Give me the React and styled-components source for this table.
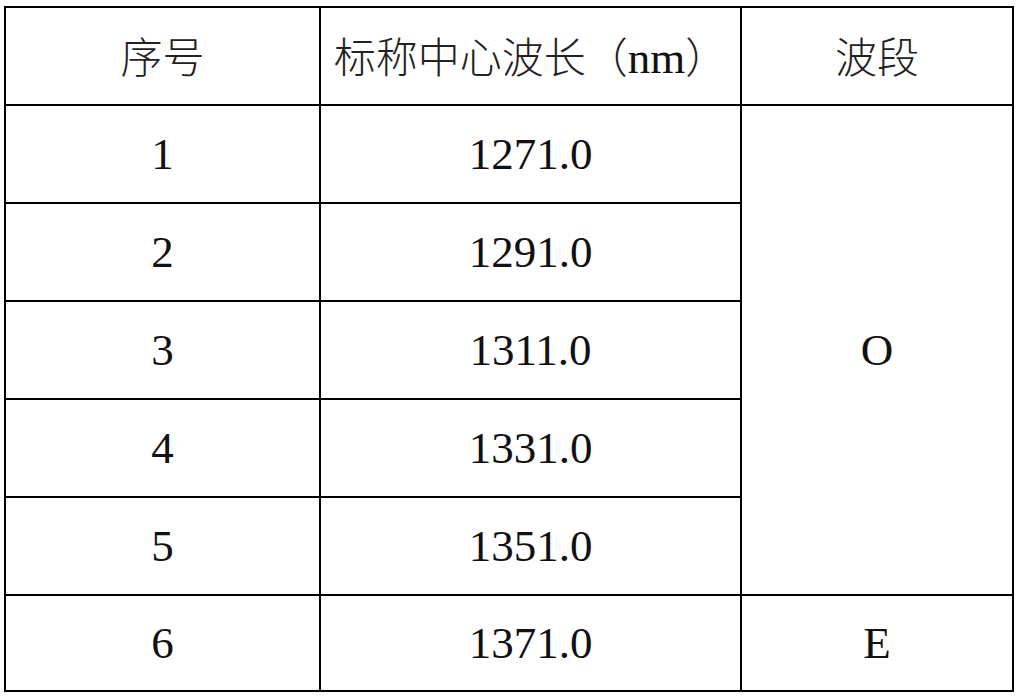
import React from "react";
import styled, { createGlobalStyle } from "styled-components";

const GlobalStyle = createGlobalStyle`
  html, body {
    margin: 0;
    padding: 0;
    background: #ffffff;
  }
  body {
    font-family: "Liberation Serif", "Noto Sans CJK SC", serif;
    color: #000;
  }
`;

const Page = styled.div`
  padding: 6px 0 0 4px;
`;

const Table = styled.table`
  border-collapse: collapse;
  table-layout: fixed;
  width: 1010px;
  font-family: "Liberation Serif", "Noto Sans CJK SC", serif;
  font-size: 45px;
  color: #111;
`;

const Row = styled.tr`
  height: ${(p) => p.$h}px;
`;

const Cell = styled.td`
  border: 2px solid #000;
  text-align: center;
  vertical-align: middle;
  padding: 0;
  line-height: 1;
`;

const HeadCell = styled.th`
  border: 2px solid #000;
  text-align: center;
  vertical-align: middle;
  padding: 2px 0 0;
  font-weight: normal;
  line-height: 1;
`;

const Han = styled.span`
  font-family: "Noto Sans CJK SC", sans-serif;
  font-size: 42px;
  font-weight: 300;
  color: #222;
  letter-spacing: 0;
`;

const rows = [
  { no: 1, wl: "1271.0" },
  { no: 2, wl: "1291.0" },
  { no: 3, wl: "1311.0" },
  { no: 4, wl: "1331.0" },
  { no: 5, wl: "1351.0" },
];

function App() {
  return (
    <>
      <GlobalStyle />
      <Page>
        <Table>
          <colgroup>
            <col style={{ width: 315 }} />
            <col style={{ width: 421 }} />
            <col style={{ width: 272 }} />
          </colgroup>
          <thead>
            <Row $h={98}>
              <HeadCell>
                <Han>序号</Han>
              </HeadCell>
              <HeadCell>
                <Han>标称中心波长（</Han>nm<Han>）</Han>
              </HeadCell>
              <HeadCell>
                <Han>波段</Han>
              </HeadCell>
            </Row>
          </thead>
          <tbody>
            {rows.map((r, i) => (
              <Row $h={98} key={r.no}>
                <Cell>{r.no}</Cell>
                <Cell>{r.wl}</Cell>
                {i === 0 && <Cell rowSpan={5}>O</Cell>}
              </Row>
            ))}
            <Row $h={96}>
              <Cell>6</Cell>
              <Cell>1371.0</Cell>
              <Cell>E</Cell>
            </Row>
          </tbody>
        </Table>
      </Page>
    </>
  );
}

export default App;
